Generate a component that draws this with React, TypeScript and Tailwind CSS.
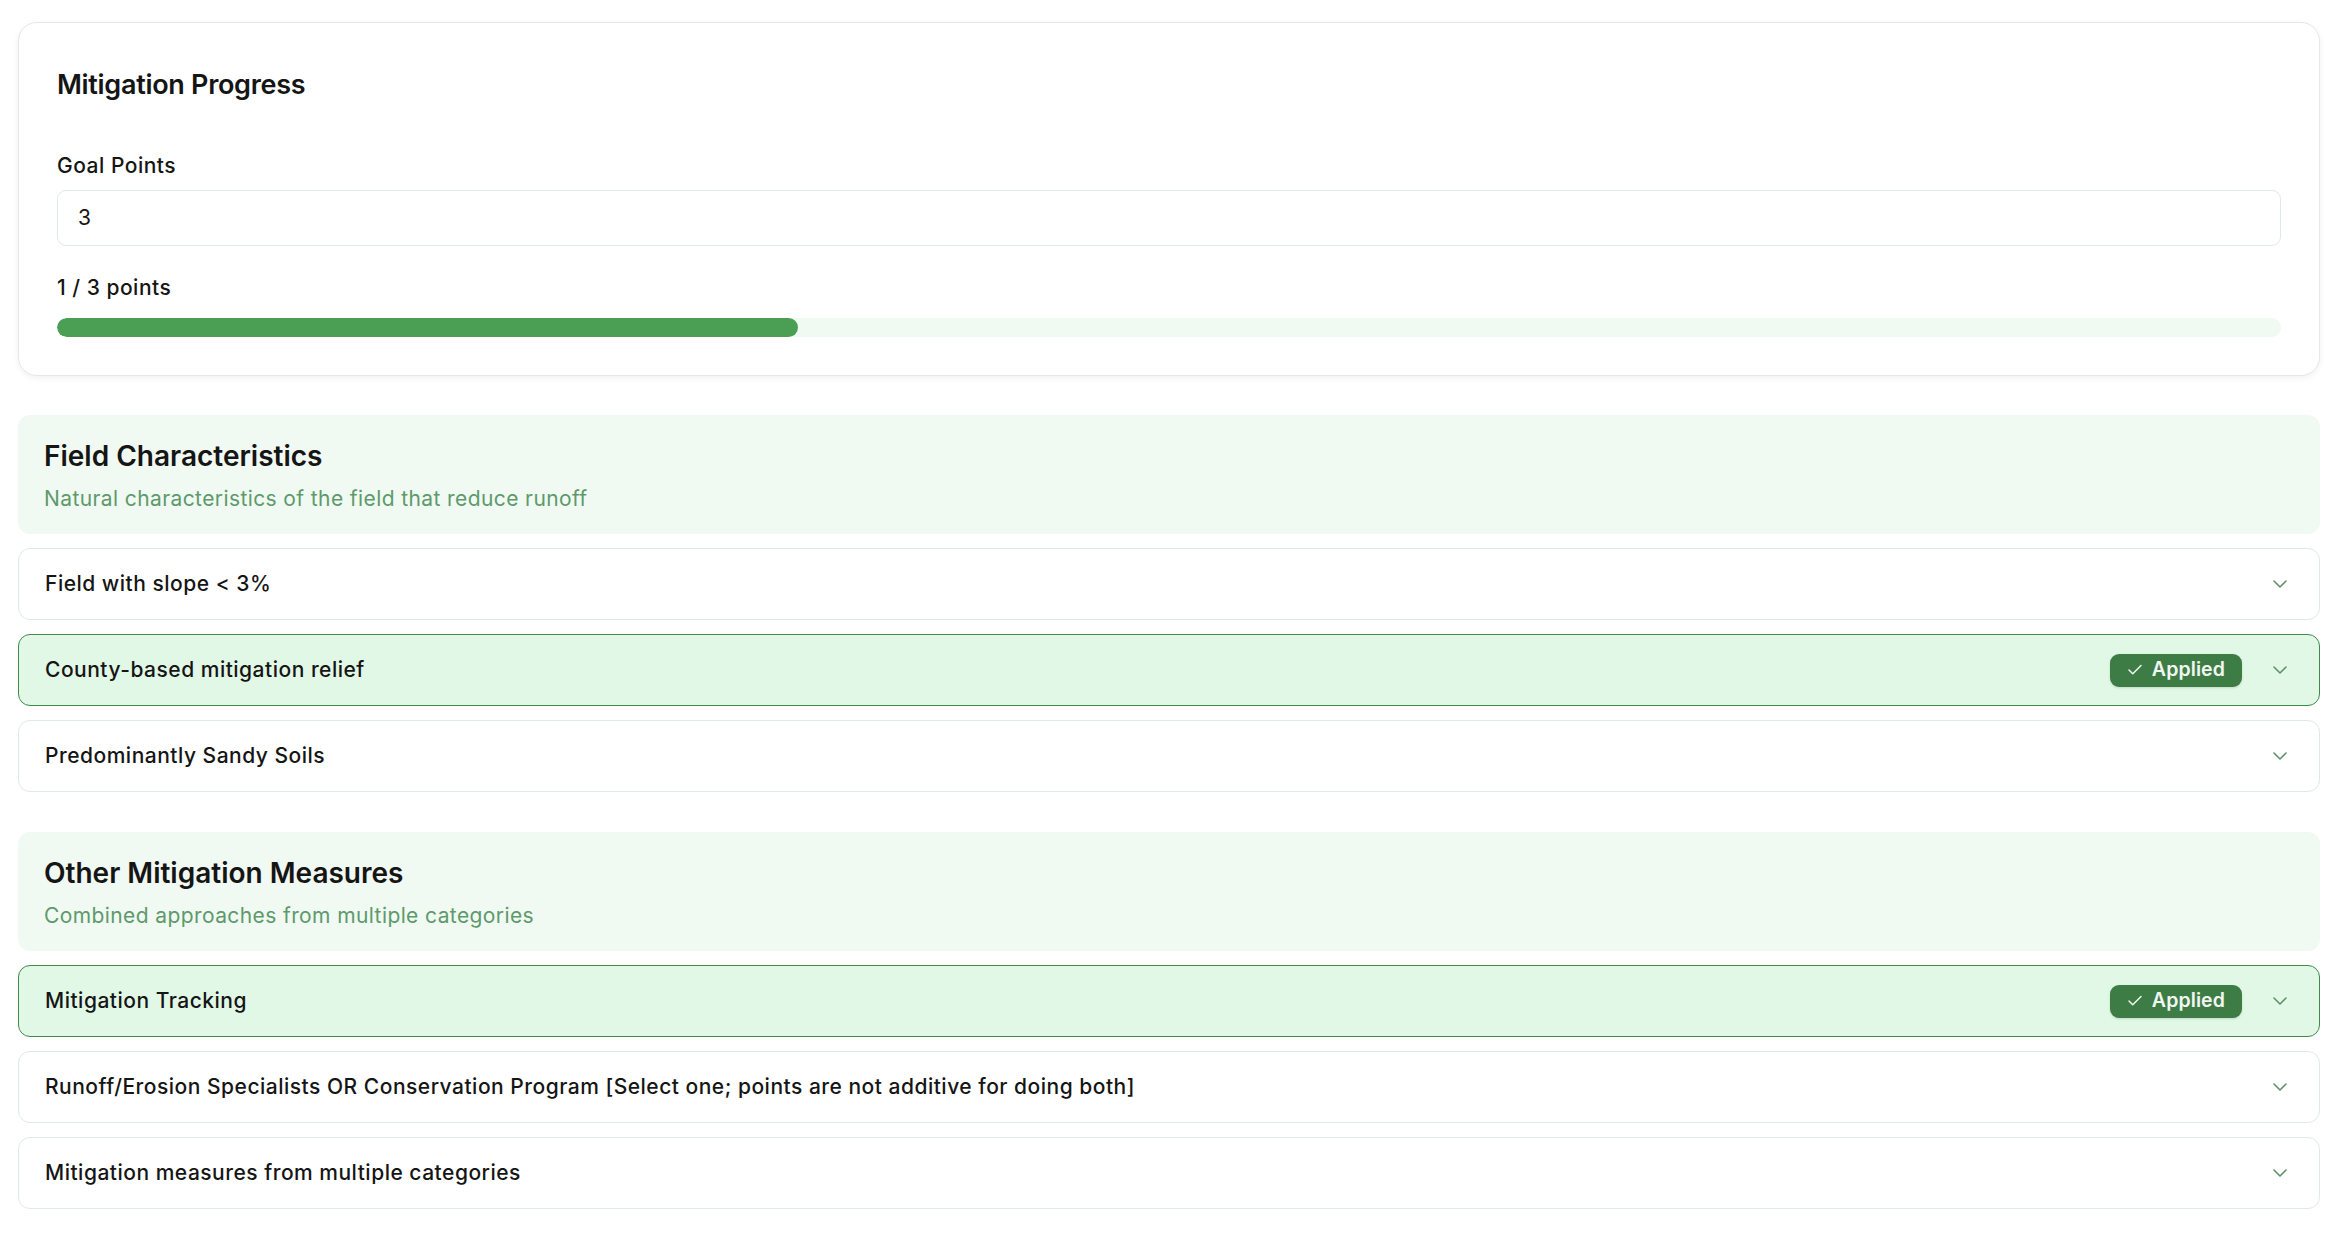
import { Check, ChevronDown } from 'lucide-react';

type Item = { label: string; applied?: boolean };

const sections: { title: string; subtitle: string; items: Item[] }[] = [
  {
    title: 'Field Characteristics',
    subtitle: 'Natural characteristics of the field that reduce runoff',
    items: [
      { label: 'Field with slope < 3%' },
      { label: 'County-based mitigation relief', applied: true },
      { label: 'Predominantly Sandy Soils' },
    ],
  },
  {
    title: 'Other Mitigation Measures',
    subtitle: 'Combined approaches from multiple categories',
    items: [
      { label: 'Mitigation Tracking', applied: true },
      {
        label:
          'Runoff/Erosion Specialists OR Conservation Program [Select one; points are not additive for doing both]',
      },
      { label: 'Mitigation measures from multiple categories' },
    ],
  },
];

function Row({ item }: { item: Item }) {
  return (
    <div
      className={`flex h-[72px] items-center justify-between rounded-[12px] border pl-[26px] pr-[27px] ${
        item.applied ? 'border-[#3f8a4a] bg-[#e1f8e7]' : 'border-[#e2e8e5] bg-white'
      }`}
    >
      <span className="text-[21px] font-medium leading-[30px] tracking-[0.5px] text-[#151515]">{item.label}</span>
      <div className="flex items-center gap-[26px]">
        {item.applied && (
          <span className="flex h-[33px] items-center gap-[8px] rounded-[9px] bg-[#3d7d45] pl-[16px] pr-[17px] text-[19.5px] font-semibold leading-none tracking-[0.1px] text-[#f2f6f2] shadow-sm">
            <Check className="h-[18px] w-[18px]" strokeWidth={2} />
            Applied
          </span>
        )}
        <ChevronDown className="h-[24px] w-[24px] text-[#5f9068]" strokeWidth={1.6} />
      </div>
    </div>
  );
}

export default function App() {
  return (
    <div
      className="min-h-screen bg-white pl-[18px] pr-[22px] pt-[22px] pb-[26px] text-[#151515]"
      style={{ fontFamily: 'Inter, "Noto Sans", "Liberation Sans", sans-serif' }}
    >
      <div className="rounded-[19px] border border-[#e4e9e7] bg-white px-[38px] pt-[44px] pb-[38px] shadow-[0_2px_6px_rgba(0,0,0,0.06)]">
        <h2 className="text-[27px] font-semibold leading-[36px] tracking-[-0.3px]">Mitigation Progress</h2>
        <div className="mt-[48px] text-[21px] font-medium leading-[30px] tracking-[0.5px]">Goal Points</div>
        <div className="mt-[9px] flex h-[56px] items-center rounded-[9px] border border-[#e2e8e6] px-[20px] text-[21px]">
          3
        </div>
        <div className="mt-[27px] text-[21px] font-medium leading-[30px] tracking-[0.5px]">1 / 3 points</div>
        <div className="mt-[15px] h-[19px] w-full overflow-hidden rounded-full bg-[#f0f9f2]">
          <div className="h-full rounded-full bg-[#4a9f54]" style={{ width: `${(1 / 3) * 100}%` }} />
        </div>
      </div>

      <div className="mt-[39px] flex flex-col gap-[40px]">
        {sections.map((s) => (
          <div key={s.title} className="flex flex-col gap-[14px]">
            <div className="rounded-[12px] bg-[#f0f9f2] px-[26px] pt-[23px] pb-[20px]">
              <h3 className="text-[28px] font-semibold leading-[36px] text-[#151515]">{s.title}</h3>
              <p className="mt-[10px] text-[21px] leading-[30px] tracking-[0.4px] text-[#5e9a6b]">{s.subtitle}</p>
            </div>
            {s.items.map((item) => (
              <Row key={item.label} item={item} />
            ))}
          </div>
        ))}
      </div>
    </div>
  );
}
